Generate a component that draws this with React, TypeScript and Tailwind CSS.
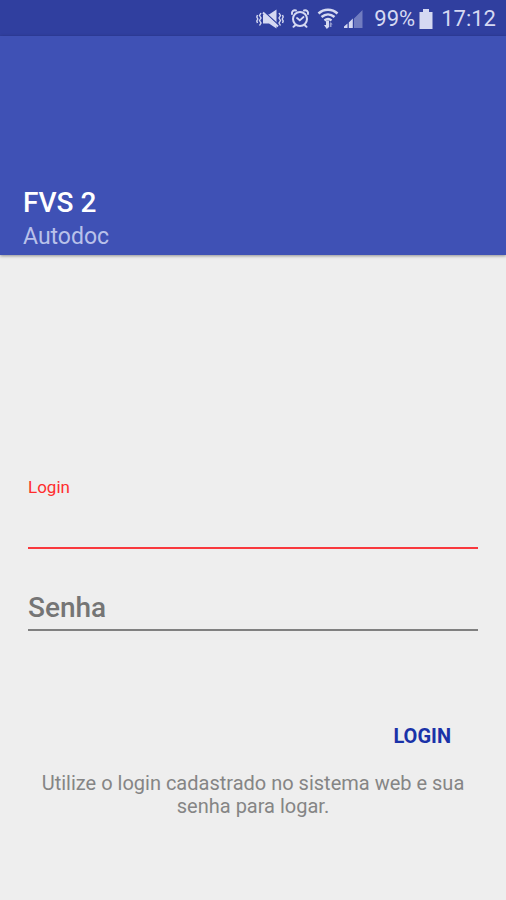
import React, { useState } from "react";

const fontRoboto = "font-['Roboto','Noto_Sans',sans-serif]";

export default function App() {
  const [login, setLogin] = useState("");
  const [password, setPassword] = useState("");

  return (
    <div className={`flex min-h-screen w-full flex-col bg-[#eeeeee] ${fontRoboto}`}>
      <StatusBar />

      <header className="flex h-[219px] flex-col justify-end bg-[#3f51b5] px-[23px] pb-[2px] shadow-[0_1px_3px_rgba(0,0,0,0.4)]">
        <h1 className="text-[28px] leading-9 font-medium text-white">FVS 2</h1>
        <p className="text-[23px] leading-8 text-[#b9c1ea]">Autodoc</p>
      </header>

      <main className="flex flex-1 flex-col px-7 pt-56">
        <form className="flex flex-col" onSubmit={(e) => e.preventDefault()}>
          <label htmlFor="login" className="text-[17px] leading-4 text-[#ff2d2d]">
            Login
          </label>
          <input
            id="login"
            type="text"
            value={login}
            onChange={(e) => setLogin(e.target.value)}
            className="h-[54px] w-full border-b-2 border-[#f9383d] bg-transparent pt-3 text-[28px] text-[#212121] outline-none"
          />

          <input
            id="password"
            type="password"
            aria-label="Senha"
            placeholder="Senha"
            value={password}
            onChange={(e) => setPassword(e.target.value)}
            className="mt-9 h-[46px] w-full border-b-2 border-[#808080] bg-transparent text-[28px] font-medium text-[#212121] outline-none placeholder:text-[#757575]"
          />

          <button
            type="submit"
            className="mt-[81px] mr-[11px] h-12 self-end px-4 text-xl font-bold text-[#1a32a8]"
          >
            LOGIN
          </button>
        </form>

        <p className="mt-3 px-2 text-center text-xl leading-[23px] text-[#858585]">
          Utilize o login cadastrado no sistema web e sua senha para logar.
        </p>
      </main>
    </div>
  );
}

function StatusBar() {
  return (
    <div className="flex h-9 items-center justify-end bg-[#303f9f] pt-[2px] pr-[10px] text-[#d5d9f2]">
      <div className="flex items-center gap-1">
        <VibrateIcon />
        <AlarmIcon />
        <WifiIcon />
        <SignalIcon />
      </div>
      <span className="ml-[10px] text-[22px] leading-8">99%</span>
      <BatteryIcon />
      <span className="ml-2 text-[22px] leading-8">17:12</span>
    </div>
  );
}

function VibrateIcon() {
  return (
    <svg width="28" height="20" viewBox="0 0 28 20" fill="none" stroke="currentColor" aria-hidden="true">
      <path d="M7 5.500h6l7.500-5v19l-7.500-5H7z" fill="currentColor" stroke="none" />
      <path d="M9 3.500l13 12" stroke="#303f9f" strokeWidth="1.500" />
      <path d="M7 3.500l15 14" strokeWidth="2" />
      <path d="M5 4L3.500 6.500 5 9l-1.500 2.500L5 14l-1.500 2.500M1.500 6L.8 8l1 2-1 2 .7 2" strokeWidth="1.400" />
      <path d="M23 4l1.500 2.500L23 9l1.500 2.500L23 14l1.500 2.500M26.500 6l.7 2-1 2 1 2-.7 2" strokeWidth="1.400" />
    </svg>
  );
}

function AlarmIcon() {
  return (
    <svg width="24" height="22" viewBox="0 0 24 22" fill="none" stroke="currentColor" strokeLinecap="round" aria-hidden="true">
      <circle cx="12" cy="11" r="7" strokeWidth="2" />
      <path d="M4 6C3.500 3.500 5.500 1.700 8 2.500M20 6C20.500 3.500 18.500 1.700 16 2.500" strokeWidth="2" />
      <path d="M9 10l2.800 2.300 3.700-3.300" strokeWidth="1.800" />
      <path d="M7 17.500l-1.500 1.300M17 17.500l1.500 1.300" strokeWidth="2" />
    </svg>
  );
}

function WifiIcon() {
  return (
    <svg width="24" height="22" viewBox="0 0 24 22" fill="none" stroke="currentColor" aria-hidden="true">
      <path d="M2.500 5.500c5.500-5 13.500-5 19 0" strokeWidth="2.600" />
      <path d="M5.500 9c4-3.500 9-3.500 13 0" strokeWidth="2.400" />
      <path d="M8.500 12.500c2.200-1.800 4.800-1.800 7 0" strokeWidth="2.400" />
      <path d="M10 12.500v4.500H8l2.800 4 2.200-2V12.500z" fill="currentColor" stroke="none" />
      <path d="M13.700 19v-3.500l1-1.500 2 2.500h-1.200V19z" fill="currentColor" stroke="none" opacity="0.6" />
    </svg>
  );
}

function SignalIcon() {
  return (
    <svg width="20" height="20" viewBox="0 0 20 20" fill="currentColor" aria-hidden="true">
      <path d="M0 19v-1.500L3.500 14.500V19zM4.800 19v-5.500L8.800 9.500V19z" />
      <path d="M10 19V9.500L13.500 6V19zM13.500 19V6L18.500 1v18z" opacity="0.400" />
    </svg>
  );
}

function BatteryIcon() {
  return (
    <svg className="ml-1" width="14" height="20" viewBox="0 0 14 20" fill="currentColor" aria-hidden="true">
      <path d="M4 0h6v3h3.500v17H.5V3H4z" />
    </svg>
  );
}
